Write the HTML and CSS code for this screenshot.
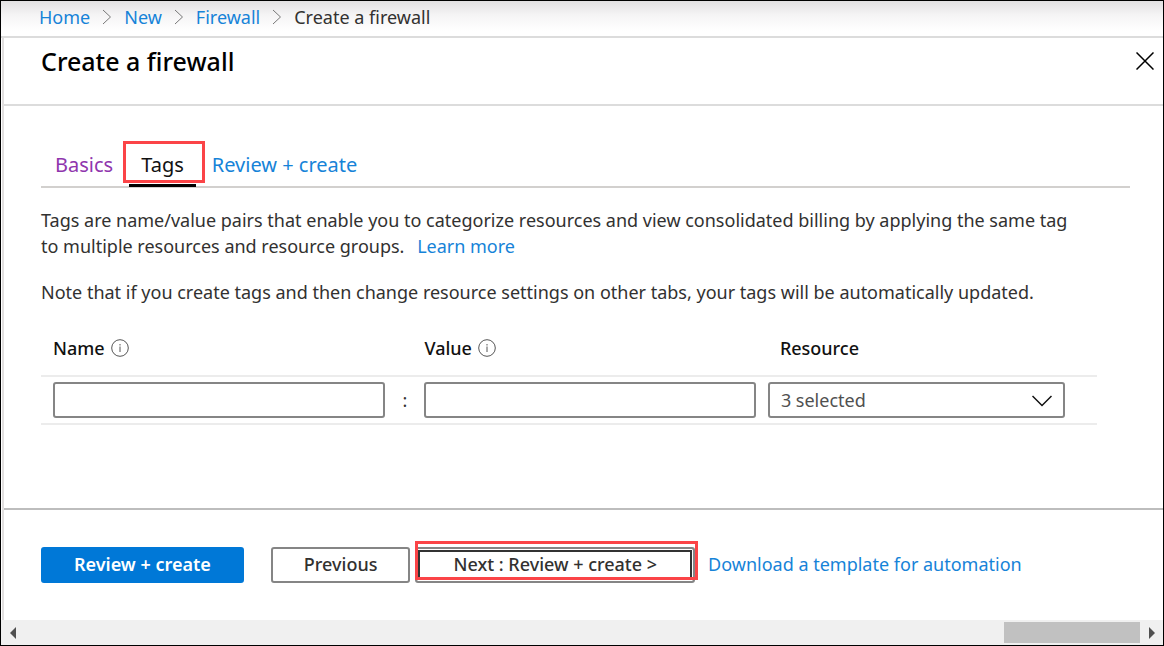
FILE: index.html
```html
<!DOCTYPE html>
<html lang="en">
<head>
<meta charset="utf-8">
<meta name="viewport" content="width=device-width, initial-scale=1">
<title>Create a firewall</title>
<link rel="stylesheet" href="styles.css">
</head>
<body>
<nav class="crumbs" aria-label="Breadcrumb">
  <a href="#">Home</a>
  <svg class="crumb-sep" viewBox="0 0 10 16" aria-hidden="true"><path d="M1 1l7.500 7L1 15"/></svg>
  <a href="#">New</a>
  <svg class="crumb-sep" viewBox="0 0 10 16" aria-hidden="true"><path d="M1 1l7.500 7L1 15"/></svg>
  <a href="#">Firewall</a>
  <svg class="crumb-sep" viewBox="0 0 10 16" aria-hidden="true"><path d="M1 1l7.500 7L1 15"/></svg>
  <span>Create a firewall</span>
</nav>
<div class="blade">
  <header class="blade-header">
    <h1>Create a firewall</h1>
    <button class="close" type="button" aria-label="Close">
      <svg viewBox="0 0 18 18" aria-hidden="true"><path d="M.5.5l17 17M17.500.5L.5 17.500"/></svg>
    </button>
  </header>
  <main class="content">
    <div class="tabs" role="tablist">
      <button class="tab visited" type="button" role="tab">Basics</button>
      <button class="tab active" type="button" role="tab" aria-selected="true">Tags</button>
      <button class="tab" type="button" role="tab">Review + create</button>
    </div>
    <p class="intro"><span>Tags are name/value pairs that enable you to categorize resources and view consolidated billing by applying the same tag to multiple resources and resource groups.</span> <a class="more" href="#">Learn more</a></p>
    <p class="note">Note that if you create tags and then change resource settings on other tabs, your tags will be automatically updated.</p>
    <table class="tags">
      <colgroup><col class="col-name"><col class="col-colon"><col class="col-value"><col class="col-resource"></colgroup>
      <thead>
        <tr>
          <th scope="col" class="pad"><span class="label"><label for="name">Name</label><svg class="info" viewBox="0 0 18 18" aria-hidden="true"><circle cx="9" cy="9" r="8.300"/><path d="M9 7.500v5.500M9 5v1.500"/></svg></span></th>
          <td></td>
          <th scope="col"><span class="label"><label for="value">Value</label><svg class="info" viewBox="0 0 18 18" aria-hidden="true"><circle cx="9" cy="9" r="8.300"/><path d="M9 7.500v5.500M9 5v1.500"/></svg></span></th>
          <th scope="col" class="resource-head"><label for="resource">Resource</label></th>
        </tr>
      </thead>
      <tbody>
        <tr>
          <td class="pad"><input class="field" id="name" type="text"></td>
          <td class="colon">:</td>
          <td><input class="field" id="value" type="text"></td>
          <td class="resource">
            <div class="select">
              <select class="field" id="resource"><option>3 selected</option></select>
              <svg class="chevron" viewBox="0 0 20 12" aria-hidden="true"><path d="M.5 1l9.500 9.500L19.500 1"/></svg>
            </div>
          </td>
        </tr>
      </tbody>
    </table>
  </main>
  <footer class="actions">
    <button class="btn primary" type="button">Review + create</button>
    <button class="btn previous" type="button">Previous</button>
    <button class="btn next" type="button">Next : Review + create &gt;</button>
    <a href="#">Download a template for automation</a>
  </footer>
</div>
<div class="scrollbar">
  <button type="button" aria-label="Scroll left"><svg viewBox="0 0 6 12" aria-hidden="true"><path d="M6 0v12L0 6z"/></svg></button>
  <div class="track"><div class="thumb"></div></div>
  <button type="button" aria-label="Scroll right"><svg viewBox="0 0 6 12" aria-hidden="true"><path d="M0 0v12l6-6z"/></svg></button>
</div>
</body>
</html>
```

FILE: styles.css
```css
* {
  box-sizing: border-box;
}

body {
  margin: 0;
  min-height: 100vh;
  display: flex;
  flex-direction: column;
  border: 1px solid #000;
  background: #fff;
  color: #323130;
  font: 18px/26px "Noto Sans", "Open Sans", sans-serif;
}

a {
  color: #1683d8;
  text-decoration: none;
}

button,
input,
select {
  font: inherit;
  color: inherit;
}

svg {
  flex: none;
  fill: none;
  stroke: #222;
}

.crumbs {
  display: flex;
  align-items: center;
  gap: 12px;
  height: 37px;
  padding: 0 38px 4px;
  border-bottom: 2px solid #dcdcdc;
  background: linear-gradient(#e2e0e2, #f5f4f5 40%, #fff 85%);
}

.crumb-sep {
  width: 10px;
  height: 16px;
  stroke: #777;
}

.blade {
  flex: 1;
  display: flex;
  flex-direction: column;
  margin-left: 1px;
  border-left: 2px solid #e1dfdf;
}

.blade-header {
  display: flex;
  align-items: flex-start;
  justify-content: space-between;
  height: 68px;
  padding: 7px 9px 0 37px;
  border-bottom: 2px solid #dcdcdc;
}

h1 {
  margin: 0;
  color: #000;
  font-size: 25px;
  line-height: 32px;
  font-weight: 500;
}

.close {
  display: flex;
  padding: 7px 0;
  border: 0;
  background: none;
}

.close svg {
  width: 18px;
  height: 18px;
}

.close path {
  stroke: #000;
  stroke-width: 1.5;
}

.content {
  flex: 1;
  padding: 35px 33px 0 37px;
}

.tabs {
  display: flex;
  gap: 16px;
  height: 47px;
  margin-bottom: 19px;
  padding-left: 14px;
  border-bottom: 2px solid #d2d0ce;
}

.tab {
  height: 46px;
  padding: 2px 0 0;
  border: 0;
  background: none;
  color: #1683d8;
  font-size: 20px;
}

.tab.visited {
  color: #8f35ad;
}

.tab.active {
  position: relative;
  padding: 4px 12px 0;
  border-bottom: 3px solid #000;
  color: #111;
}

.tab.active::after {
  content: "";
  position: absolute;
  inset: 0 -9px 1px -6px;
  border: 3px solid #fb4447;
}

p {
  margin: 0 0 20px;
}

.intro {
  padding-right: 48px;
}

.note {
  margin-bottom: 16px;
}

.more {
  margin-left: 8px;
}

.tags {
  width: 97%;
  table-layout: fixed;
  border-collapse: collapse;
}

.col-name {
  width: 344px;
}

.col-colon {
  width: 39px;
}

.col-value {
  width: 331px;
}

.col-resource {
  width: 341px;
}

th,
td {
  padding: 0;
  text-align: left;
}

thead th {
  height: 55px;
  color: #111;
  font-weight: 500;
}

tr {
  border-bottom: 2px solid #ececec;
}

tbody td {
  height: 48px;
}

.pad {
  padding-left: 12px;
}

.resource-head {
  padding-left: 24px;
}

.label {
  display: flex;
  align-items: center;
  gap: 6px;
}

.info {
  width: 18px;
  height: 18px;
  stroke: #555;
}

.field {
  display: block;
  width: 100%;
  height: 36px;
  padding: 0 11px;
  border: 2px solid #858585;
  border-radius: 3px;
  background: #fff;
}

.colon {
  text-align: center;
}

.resource {
  padding: 0 32px 0 12px;
}

.select {
  position: relative;
}

.select .field {
  appearance: none;
  color: #505050;
}

.chevron {
  position: absolute;
  top: 13px;
  right: 13px;
  width: 20px;
  height: 12px;
  stroke: #111;
  stroke-width: 1.5;
  pointer-events: none;
}

.actions {
  display: flex;
  align-items: center;
  height: 112px;
  padding: 0 37px;
  border-top: 2px solid #bdbdbd;
}

.actions a {
  padding-bottom: 2px;
}

.btn {
  height: 36px;
  padding: 0 31px 2px;
  border: 2px solid #858585;
  border-radius: 3px;
  background: #fff;
  font-weight: 500;
}

.primary {
  border-color: #0078d7;
  background: #0078d7;
  color: #fff;
  font-weight: 600;
}

.previous {
  margin-left: 27px;
}

.next {
  position: relative;
  margin: 0 13px 0 5px;
  padding: 0 36px 2px;
  box-shadow: inset 0 0 0 1px #fff, inset 0 0 0 3px #333;
}

.next::after {
  content: "";
  position: absolute;
  inset: -8px -5px 1px -2px;
  border: 3px solid #fb4447;
}

.scrollbar {
  display: flex;
  height: 25px;
  background: #f0f0f0;
}

.scrollbar button {
  display: flex;
  align-items: center;
  justify-content: center;
  width: 23px;
  padding: 0;
  border: 0;
  background: none;
}

.scrollbar svg {
  width: 6px;
  height: 12px;
  fill: #505050;
  stroke: none;
}

.track {
  flex: 1;
  padding: 2px 0;
}

.thumb {
  width: 136px;
  height: 21px;
  margin-left: auto;
  background: #c1c1c1;
}
```
